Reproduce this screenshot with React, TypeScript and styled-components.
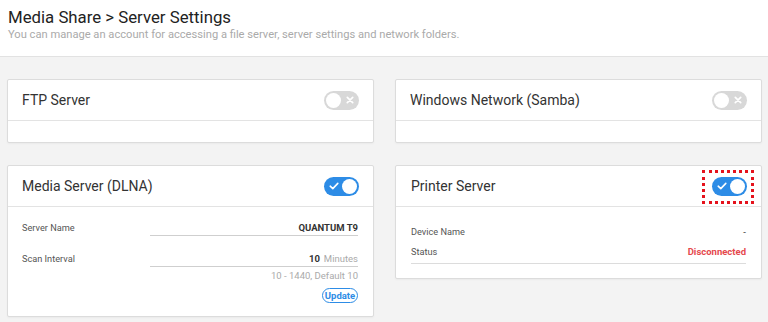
import React from "react";
import styled, { createGlobalStyle, css } from "styled-components";

const GlobalStyle = createGlobalStyle`
  html, body { margin: 0; padding: 0; }
  body {
    background: #f3f3f3;
    font-family: Roboto, "Liberation Sans", Arial, sans-serif;
    color: #333;
    width: 768px;
    height: 322px;
    overflow: hidden;
  }
`;

const Page = styled.div`
  display: flex;
  flex-direction: column;
`;

const Header = styled.header`
  height: 57px;
  box-sizing: border-box;
  background: #fff;
  border-bottom: 1px solid #e2e2e2;
  padding: 6px 8px 0 8px;
`;

const Title = styled.h1`
  margin: 0;
  font-size: 16.8px;
  font-weight: 400;
  line-height: 22px;
  color: #222;
`;

const Subtitle = styled.p`
  margin: 0;
  font-size: 11.15px;
  line-height: 13px;
  color: #aaa;
`;

const Grid = styled.main`
  display: grid;
  grid-template-columns: 367px 367px;
  column-gap: 21px;
  row-gap: 22px;
  align-items: start;
  padding: 22px 6px 0 7px;
`;

const Card = styled.section`
  background: #fff;
  border: 1px solid #dcdcdc;
  border-radius: 2px;
  box-shadow: 0 1px 2px rgba(0, 0, 0, 0.04);
`;

const CardHeader = styled.div<{ $pad?: number }>`
  height: 40px;
  display: flex;
  align-items: center;
  justify-content: space-between;
  padding: 0 14px 0 ${(p) => p.$pad ?? 14}px;
  border-bottom: 1px solid #e3e3e3;
`;

const CardTitle = styled.h2`
  margin: 0;
  font-size: 14px;
  font-weight: 400;
  color: #333;
`;

const EmptyBody = styled.div`
  height: 21px;
`;

const Switch = styled.div<{ $on: boolean; $highlight?: boolean }>`
  position: relative;
  width: 35px;
  height: 19px;
  border-radius: 10px;
  box-sizing: border-box;
  background: ${(p) => (p.$on ? "#2d8ce6" : "#d8d8d8")};
  display: flex;
  align-items: center;
  justify-content: space-between;
  padding: 0 2px;
  flex-direction: ${(p) => (p.$on ? "row" : "row-reverse")};
  ${(p) =>
    p.$highlight &&
    css`
      &::after {
        content: "";
        position: absolute;
        top: -7px;
        bottom: -8px;
        left: -10px;
        right: -7px;
        border: 3px dotted #e5121c;
      }
    `}
`;

const Knob = styled.span`
  width: 15px;
  height: 15px;
  border-radius: 50%;
  background: #fff;
`;

const Glyph = styled.span`
  width: 15px;
  height: 15px;
  display: flex;
  align-items: center;
  justify-content: center;
`;

const Toggle: React.FC<{ on: boolean; highlight?: boolean }> = ({ on, highlight }) => (
  <Switch $on={on} $highlight={highlight}>
    <Glyph>
      {on ? (
        <svg width="10" height="8" viewBox="0 0 10 8">
          <path d="M1.2 4.2 L3.8 6.6 L8.8 1.4" fill="none" stroke="#fff" strokeWidth="1.6" strokeLinecap="round" strokeLinejoin="round" />
        </svg>
      ) : (
        <svg width="8" height="8" viewBox="0 0 8 8">
          <path d="M1.3 1.3 L6.7 6.7 M6.7 1.3 L1.3 6.7" fill="none" stroke="#fff" strokeWidth="1.7" strokeLinecap="round" />
        </svg>
      )}
    </Glyph>
    <Knob />
  </Switch>
);

const DlnaBody = styled.div`
  padding: 15px 15px 13px 14px;
  display: flex;
  flex-direction: column;
`;

const FieldRow = styled.div<{ $gap?: number }>`
  display: grid;
  grid-template-columns: 128px 1fr;
  align-items: end;
  margin-top: ${(p) => p.$gap ?? 0}px;
`;

const Label = styled.span`
  font-size: 9.2px;
  line-height: 12px;
  color: #555;
  padding-bottom: 2px;
`;

const ValueBox = styled.div`
  border-bottom: 1px solid #cfcfcf;
  padding-bottom: 1px;
  text-align: right;
  font-size: 9.5px;
  line-height: 12px;
`;

const Strong = styled.span`
  font-weight: 700;
  color: #333;
`;

const Unit = styled.span`
  color: #aaa;
  margin-left: 4px;
`;

const Hint = styled.div`
  margin-top: 3px;
  text-align: right;
  font-size: 9.5px;
  line-height: 12px;
  color: #aaa;
`;

const ButtonRow = styled.div`
  display: flex;
  justify-content: flex-end;
  margin-top: 6px;
`;

const OutlineButton = styled.button`
  width: 36px;
  height: 15px;
  padding: 0;
  box-sizing: border-box;
  border: 1.5px solid #2d8ce6;
  border-radius: 8px;
  background: #fff;
  color: #2d8ce6;
  font-family: inherit;
  font-size: 9.5px;
  font-weight: 700;
  line-height: 11px;
`;

const InfoBody = styled.div`
  padding: 19px 15px 14px 15px;
`;

const InfoList = styled.div`
  display: flex;
  flex-direction: column;
  gap: 8px;
  padding-bottom: 5px;
  border-bottom: 1.5px solid #dcdcdc;
`;

const InfoRow = styled.div`
  display: flex;
  justify-content: space-between;
  font-size: 9.2px;
  line-height: 12px;
  color: #555;
`;

const InfoValue = styled.span<{ $tone?: "danger" }>`
  font-weight: ${(p) => (p.$tone ? 700 : 400)};
  font-size: 9.5px;
  color: ${(p) => (p.$tone === "danger" ? "#e5484d" : "#333")};
`;

export default function App() {
  return (
    <Page>
      <GlobalStyle />
      <Header>
        <Title>Media Share &gt; Server Settings</Title>
        <Subtitle>You can manage an account for accessing a file server, server settings and network folders.</Subtitle>
      </Header>
      <Grid>
        <Card>
          <CardHeader>
            <CardTitle>FTP Server</CardTitle>
            <Toggle on={false} />
          </CardHeader>
          <EmptyBody />
        </Card>
        <Card>
          <CardHeader>
            <CardTitle>Windows Network (Samba)</CardTitle>
            <Toggle on={false} />
          </CardHeader>
          <EmptyBody />
        </Card>
        <Card>
          <CardHeader>
            <CardTitle>Media Server (DLNA)</CardTitle>
            <Toggle on />
          </CardHeader>
          <DlnaBody>
            <FieldRow>
              <Label>Server Name</Label>
              <ValueBox>
                <Strong>QUANTUM T9</Strong>
              </ValueBox>
            </FieldRow>
            <FieldRow $gap={17}>
              <Label>Scan Interval</Label>
              <ValueBox>
                <Strong>10</Strong>
                <Unit>Minutes</Unit>
              </ValueBox>
            </FieldRow>
            <Hint>10 - 1440, Default 10</Hint>
            <ButtonRow>
              <OutlineButton>Update</OutlineButton>
            </ButtonRow>
          </DlnaBody>
        </Card>
        <Card>
          <CardHeader $pad={15}>
            <CardTitle>Printer Server</CardTitle>
            <Toggle on highlight />
          </CardHeader>
          <InfoBody>
            <InfoList>
              <InfoRow>
                <span>Device Name</span>
                <InfoValue>-</InfoValue>
              </InfoRow>
              <InfoRow>
                <span>Status</span>
                <InfoValue $tone="danger">Disconnected</InfoValue>
              </InfoRow>
            </InfoList>
          </InfoBody>
        </Card>
      </Grid>
    </Page>
  );
}
